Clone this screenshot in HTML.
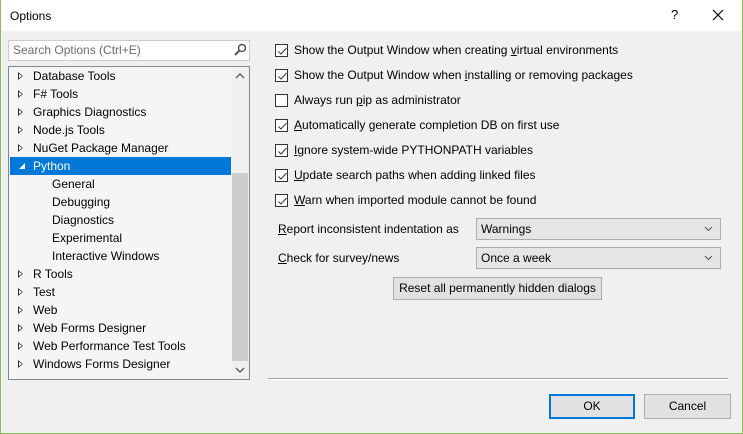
<!DOCTYPE html>
<html><head><style>
*{box-sizing:border-box;margin:0;padding:0}
body{width:743px;height:434px;background:#f0f0f0;font-family:"Liberation Sans",sans-serif;font-size:12px;color:#000;position:relative;overflow:hidden}
.a{position:absolute}
.title{left:0;top:0;width:743px;height:31px;background:#fff}
.tree div{position:absolute;left:0;height:18px;line-height:18px;white-space:nowrap}
.tri{position:absolute;left:10px;top:5px;width:0;height:0;border-left:5px solid #333;border-top:4px solid transparent;border-bottom:4px solid transparent}
.tri:after{content:"";position:absolute;left:-4px;top:-2px;border-left:3px solid #fff;border-top:2px solid transparent;border-bottom:2px solid transparent}
.cb{position:absolute;left:275px;width:13px;height:13px;border:1px solid #333;background:#fff}
.cb svg{position:absolute;left:1px;top:1px}
.lbl{position:absolute;left:294px;white-space:nowrap}
.combo{position:absolute;left:476px;width:245px;height:22px;border:1px solid #adadad;background:#e5e5e5;padding-left:4px;line-height:20px}
.btn{position:absolute;background:#e1e1e1;border:1px solid #adadad;text-align:center}
u{text-decoration:underline}
</style></head><body>
<div class="a title"></div>
<div class="a" style="left:0;top:0;width:1px;height:434px;background:#8cbd5a"></div>
<div class="a" style="left:742px;top:0;width:1px;height:434px;background:#8cbd5a"></div>
<div class="a" style="left:0;top:433px;width:743px;height:1px;background:#8cbd5a"></div>
<div class="a" style="left:10px;top:9px;font-size:12px">Options</div>
<div class="a" style="left:671px;top:7px;font-size:13px">?</div>
<svg class="a" style="left:712px;top:9px" width="12" height="12"><path d="M1 1L11 11M11 1L1 11" stroke="#000" stroke-width="1.2"/></svg>

<div class="a" style="left:8px;top:40px;width:242px;height:21px;background:#fff;border:1px solid #ccc"></div>
<div class="a" style="left:13px;top:43px;color:#6d6d6d">Search Options (Ctrl+E)</div>
<svg class="a" style="left:233px;top:43px" width="14" height="14"><circle cx="9" cy="5" r="3.5" fill="none" stroke="#555" stroke-width="1.5"/><path d="M6.5 7.5L2 12" stroke="#555" stroke-width="2"/></svg>

<div class="a" style="left:8px;top:66px;width:242px;height:314px;background:#f5f5f5;border:1px solid #828790"></div>
<div class="a" style="left:232px;top:67px;width:17px;height:312px;background:#f0f0f0"></div>
<div class="a" style="left:232px;top:173px;width:16px;height:188px;background:#cdcdcd"></div>
<svg class="a" style="left:235px;top:72px" width="10" height="8"><path d="M1 6L5 2L9 6" stroke="#606060" stroke-width="1.5" fill="none"/></svg>
<svg class="a" style="left:235px;top:366px" width="10" height="8"><path d="M1 2L5 6L9 2" stroke="#606060" stroke-width="1.5" fill="none"/></svg>
<div class="a" style="left:10px;top:157px;width:221px;height:18px;background:#0078d7"></div>
<div class="a tree" style="left:9px;top:67px;width:221px;height:310px">
<div style="top:0"><span class="tri" style="left:9px"></span><span style="margin-left:24px">Database Tools</span></div>
<div style="top:18px"><span class="tri" style="left:9px"></span><span style="margin-left:24px">F# Tools</span></div>
<div style="top:36px"><span class="tri" style="left:9px"></span><span style="margin-left:24px">Graphics Diagnostics</span></div>
<div style="top:54px"><span class="tri" style="left:9px"></span><span style="margin-left:24px">Node.js Tools</span></div>
<div style="top:72px"><span class="tri" style="left:9px"></span><span style="margin-left:24px">NuGet Package Manager</span></div>
<div style="top:90px;color:#fff"><svg style="position:absolute;left:9px;top:5px" width="8" height="8"><path d="M7 1L7 7L1 7Z" fill="#fff"/></svg><span style="margin-left:24px">Python</span></div>
<div style="top:108px"><span style="margin-left:43px">General</span></div>
<div style="top:126px"><span style="margin-left:43px">Debugging</span></div>
<div style="top:144px"><span style="margin-left:43px">Diagnostics</span></div>
<div style="top:162px"><span style="margin-left:43px">Experimental</span></div>
<div style="top:180px"><span style="margin-left:43px">Interactive Windows</span></div>
<div style="top:198px"><span class="tri" style="left:9px"></span><span style="margin-left:24px">R Tools</span></div>
<div style="top:216px"><span class="tri" style="left:9px"></span><span style="margin-left:24px">Test</span></div>
<div style="top:234px"><span class="tri" style="left:9px"></span><span style="margin-left:24px">Web</span></div>
<div style="top:252px"><span class="tri" style="left:9px"></span><span style="margin-left:24px">Web Forms Designer</span></div>
<div style="top:270px"><span class="tri" style="left:9px"></span><span style="margin-left:24px">Web Performance Test Tools</span></div>
<div style="top:288px"><span class="tri" style="left:9px"></span><span style="margin-left:24px">Windows Forms Designer</span></div>
</div>

<div class="cb" style="top:44px"><svg width="11" height="11"><path d="M1.5 5.5L4 8L9.5 2" stroke="#333" fill="none"/></svg></div>
<div class="lbl" style="top:43px">Show the Output Window when creating <u>v</u>irtual environments</div>
<div class="cb" style="top:69px"><svg width="11" height="11"><path d="M1.5 5.5L4 8L9.5 2" stroke="#333" fill="none"/></svg></div>
<div class="lbl" style="top:68px">Show the Output Window when <u>i</u>nstalling or removing packages</div>
<div class="cb" style="top:94px"></div>
<div class="lbl" style="top:93px">Always run <u>p</u>ip as administrator</div>
<div class="cb" style="top:119px"><svg width="11" height="11"><path d="M1.5 5.5L4 8L9.5 2" stroke="#333" fill="none"/></svg></div>
<div class="lbl" style="top:118px"><u>A</u>utomatically generate completion DB on first use</div>
<div class="cb" style="top:144px"><svg width="11" height="11"><path d="M1.5 5.5L4 8L9.5 2" stroke="#333" fill="none"/></svg></div>
<div class="lbl" style="top:143px"><u>I</u>gnore system-wide PYTHONPATH variables</div>
<div class="cb" style="top:169px"><svg width="11" height="11"><path d="M1.5 5.5L4 8L9.5 2" stroke="#333" fill="none"/></svg></div>
<div class="lbl" style="top:168px"><u>U</u>pdate search paths when adding linked files</div>
<div class="cb" style="top:194px"><svg width="11" height="11"><path d="M1.5 5.5L4 8L9.5 2" stroke="#333" fill="none"/></svg></div>
<div class="lbl" style="top:193px"><u>W</u>arn when imported module cannot be found</div>

<div class="a" style="left:278px;top:222px"><u>R</u>eport inconsistent indentation as</div>
<div class="combo" style="top:218px">Warnings</div>
<svg class="a" style="left:704px;top:226px" width="9" height="6"><path d="M1 1L4.5 4.5L8 1" stroke="#555" fill="none"/></svg>
<div class="a" style="left:278px;top:251px"><u>C</u>heck for survey/news</div>
<div class="combo" style="top:247px">Once a week</div>
<svg class="a" style="left:704px;top:255px" width="9" height="6"><path d="M1 1L4.5 4.5L8 1" stroke="#555" fill="none"/></svg>
<div class="btn" style="left:393px;top:277px;width:209px;height:23px;line-height:21px">Reset all permanently hidden dialogs</div>

<div class="a" style="left:268px;top:378px;width:460px;height:1px;background:#a0a0a0"></div>
<div class="a" style="left:268px;top:379px;width:460px;height:1px;background:#fff"></div>
<div class="btn" style="left:549px;top:394px;width:86px;height:25px;line-height:21px;border:2px solid #0078d7">OK</div>
<div class="btn" style="left:644px;top:394px;width:87px;height:25px;line-height:23px">Cancel</div>
</body></html>
